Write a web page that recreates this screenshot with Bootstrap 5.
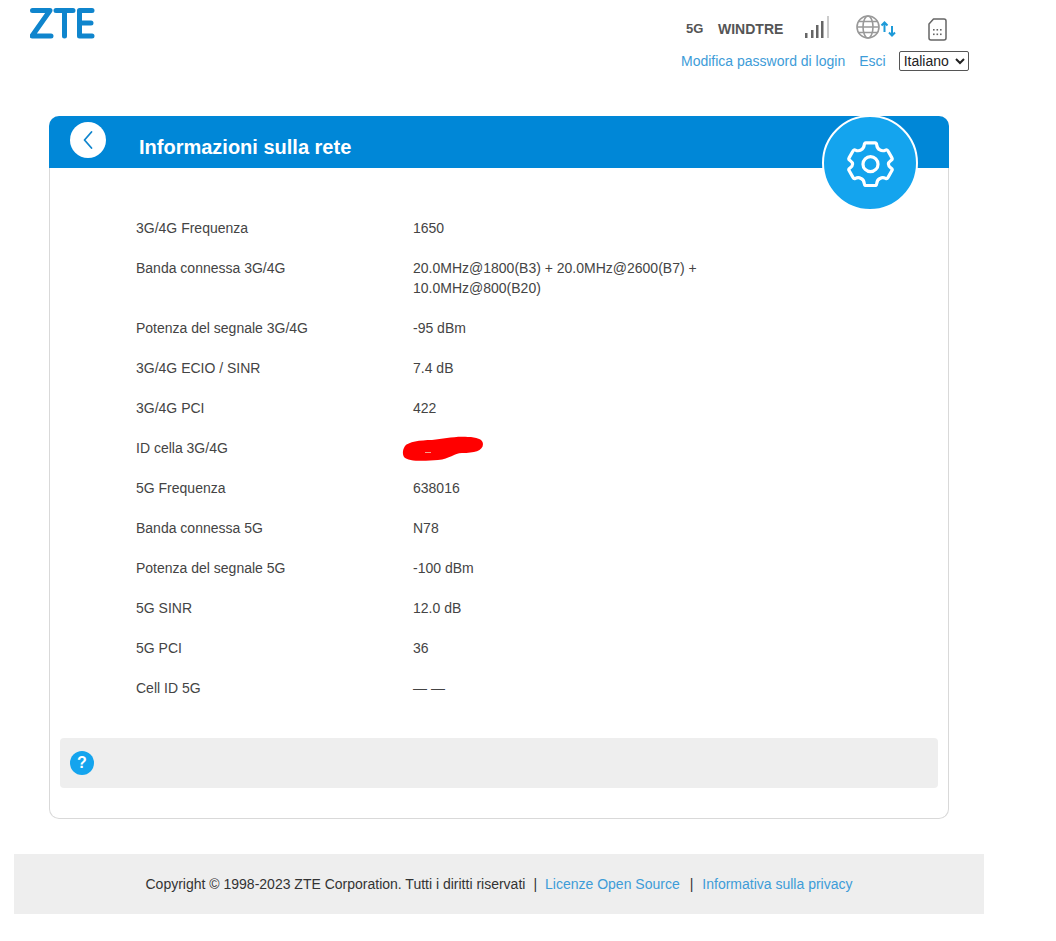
<!DOCTYPE html>
<html lang="it">
<head>
<meta charset="utf-8">
<title>Informazioni sulla rete</title>
<link href="https://cdn.jsdelivr.net/npm/bootstrap@5.3.0/dist/css/bootstrap.min.css" rel="stylesheet">
<style>
body{font-family:"Liberation Sans",Arial,sans-serif;font-size:14px;color:#444;background:#fff;height:941px;overflow:hidden}
a{color:#3d9cd8;text-decoration:none}
.shell{width:970px;margin-left:14px}
.top-bar{height:116px;padding:8px 15px 0 16px}
.logo-svg{display:block;width:66px;height:31px}
.status-col{width:288px}
.status-row{height:41px;padding:7px 0 0 5px}
.net-tag{font-weight:700;color:#555;font-size:14px}
.tag-5g{font-size:13px;width:32px}
.tag-op{width:87px}
.sig-svg{width:25px;height:25px;margin-right:26px}
.globe-svg{width:41px;height:25px;margin-right:31px}
.sim-svg{width:19px;height:23px;margin-top:3px}
.link-row{font-size:14px;line-height:20px;height:20px;margin-top:2px}
.link-row a{margin-right:14px}
.link-row a + a{margin-right:13px}
.lang-select{font-family:"Liberation Sans",Arial,sans-serif;font-size:14px;width:70px;height:20px;color:#222;background:#fff;border:1px solid #555;border-radius:2px;padding:0}
.panel{width:900px;margin-left:35px;height:703px;border:1px solid #d9d9d9;border-top:0;border-radius:10px;position:relative}
.panel-head{height:52px;background:#0087d7;border-radius:10px 10px 0 0;margin:0 -1px;padding:0 0 0 21px}
.back-dot{width:36px;height:36px;border-radius:50%;background:#fff;margin-top:6px}
.back-dot svg{width:12px;height:20px}
.panel-title{color:#fff;font-size:20px;font-weight:700;margin:0 0 0 33px;line-height:62px}
.gear-badge{position:absolute;left:772px;top:-1px;width:96px;height:96px;border-radius:50%;background:#14a4ee;border:2px solid #fff}
.gear-badge svg{width:47px;height:47px}
.info-list{padding:40px 0 0 86px;height:570px;margin:0}
.info-row{min-height:40px;line-height:20px;padding:10px 0}
.info-key{width:277px;flex:none}
.info-val{width:300px}
.mask-svg{display:block;width:82px;height:28px;margin:-3px 0 -5px -11px}
.help-bar{height:50px;margin:0 10px;background:#eee;border-radius:4px;padding-left:10px}
.help-dot{width:24px;height:24px;border-radius:50%;background:#14a4ee;color:#fff;font-weight:700;font-size:16px;line-height:24px;text-align:center}
.foot-bar{height:60px;margin-top:35px;background:#eee;line-height:60px;color:#333;text-align:center}
.foot-sep{margin:0 8px}
.foot-sep-b{margin:0 9px 0 10px}
</style>
</head>
<body>
<div class="shell">
  <header class="top-bar d-flex justify-content-between">
    <svg class="logo-svg" viewBox="0 0 66 31" role="img" aria-label="ZTE">
      <g fill="none" stroke="#0f85cd" stroke-width="5" stroke-linecap="round" stroke-linejoin="round">
        <path d="M2.500 2.500H20L2 28H21"/>
        <path d="M26 2.500H43M34.500 2.500V28"/>
        <path d="M62 2.500H49.500V28H62M49.500 15H61"/>
      </g>
    </svg>
    <div class="status-col">
      <div class="status-row d-flex align-items-start">
        <span class="net-tag tag-5g mt-1">5G</span>
        <span class="net-tag tag-op mt-1">WINDTRE</span>
        <svg class="sig-svg" viewBox="0 0 25 25">
          <g fill="#666"><rect x="0" y="18" width="2.500" height="5"/><rect x="6" y="15" width="2.500" height="8"/><rect x="11" y="10" width="2.500" height="13"/><rect x="16" y="6" width="2.500" height="17"/></g>
          <rect x="22" y="1" width="2" height="22" fill="#ccc"/>
        </svg>
        <svg class="globe-svg" viewBox="0 0 41 25">
          <g fill="none" stroke="#999" stroke-width="1.600"><circle cx="12" cy="12" r="11"/><ellipse cx="12" cy="12" rx="5" ry="11"/><path d="M1 12H23M2.500 6.500H21.500M2.500 17.500H21.500"/></g>
          <g fill="none" stroke="#1d9ad8" stroke-width="2"><path d="M28.500 7.500V17M25.500 10.500L28.500 7.500L31.500 10.500"/><path d="M36 11V20.500M33 17.500L36 20.500L39 17.500"/></g>
        </svg>
        <svg class="sim-svg" viewBox="0 0 19 23">
          <path d="M5.500 1H16a2 2 0 0 1 2 2V20a2 2 0 0 1-2 2H3a2 2 0 0 1-2-2V6Z" fill="none" stroke="#666" stroke-width="1.500" stroke-linejoin="round"/>
          <g fill="#666"><rect x="5" y="11" width="1.600" height="1.600"/><rect x="8.500" y="11" width="1.600" height="1.600"/><rect x="12" y="11" width="1.600" height="1.600"/><rect x="5" y="15.500" width="1.600" height="1.600"/><rect x="8.500" y="15.500" width="1.600" height="1.600"/><rect x="12" y="15.500" width="1.600" height="1.600"/></g>
        </svg>
      </div>
      <div class="link-row d-flex align-items-center">
        <a href="#">Modifica password di login</a>
        <a href="#">Esci</a>
        <select class="lang-select" aria-label="Lingua"><option>Italiano</option></select>
      </div>
    </div>
  </header>

  <section class="panel">
    <div class="panel-head d-flex align-items-start">
      <div class="back-dot d-flex align-items-center justify-content-center">
        <svg viewBox="0 0 12 20"><path d="M9.500 2L2.500 10L9.500 18" fill="none" stroke="#0f85cd" stroke-width="1.800" stroke-linecap="round" stroke-linejoin="round"/></svg>
      </div>
      <h1 class="panel-title">Informazioni sulla rete</h1>
    </div>
    <div class="gear-badge d-flex align-items-center justify-content-center">
      <svg viewBox="0 0 50 50"><g fill="none" stroke="#fff" stroke-width="3.400" stroke-linejoin="round"><path d="M20 3H30C31 3 31.500 4 31.700 5.500C32 8 33 9.500 35 10.500C37 11.700 39 11.700 41 10.700C42 10.200 43 10.500 43.500 11.500L47.800 19C48.300 20 48 21 47 21.500C45 23 44 24 44 25.500C44 27 45 28.500 47 30C48 30.500 48.300 31.500 47.800 32.500L43.500 40C43 41 42 41.300 41 40.800C39 39.800 37 39.800 35 41C33 42 32 43.500 31.700 46C31.500 47.500 31 48.500 30 48.500H20C19 48.500 18.500 47.500 18.300 46C18 43.500 17 42 15 41C13 39.800 11 39.800 9 40.800C8 41.300 7 41 6.500 40L2.200 32.500C1.700 31.500 2 30.500 3 30C5 28.500 6 27 6 25.500C6 24 5 23 3 21.500C2 21 1.700 20 2.200 19L6.500 11.500C7 10.500 8 10.200 9 10.700C11 11.700 13 11.700 15 10.500C17 9.500 18 8 18.300 5.500C18.500 4 19 3 20 3Z"/><circle cx="25" cy="25.700" r="8"/></g></svg>
    </div>
    <div class="info-list">
      <div class="info-row d-flex"><div class="info-key">3G/4G Frequenza</div><div class="info-val">1650</div></div>
      <div class="info-row d-flex"><div class="info-key">Banda connessa 3G/4G</div><div class="info-val">20.0MHz@1800(B3) + 20.0MHz@2600(B7) + 10.0MHz@800(B20)</div></div>
      <div class="info-row d-flex"><div class="info-key">Potenza del segnale 3G/4G</div><div class="info-val">-95 dBm</div></div>
      <div class="info-row d-flex"><div class="info-key">3G/4G ECIO / SINR</div><div class="info-val">7.4 dB</div></div>
      <div class="info-row d-flex"><div class="info-key">3G/4G PCI</div><div class="info-val">422</div></div>
      <div class="info-row d-flex"><div class="info-key">ID cella 3G/4G</div><div class="info-val"><svg class="mask-svg" viewBox="0 0 82 28"><path d="M3 11C6 7 18 5 30 5C42 4 52 1 66 2C74 2 81 4 81 9C81 16 72 18 60 18C52 18 48 24 36 25C24 26 6 27 2 22C0 18 1 14 3 11Z" fill="#f00"/><path d="M23 17.500H29" stroke="#f4a08c" stroke-width="1" fill="none"/></svg></div></div>
      <div class="info-row d-flex"><div class="info-key">5G Frequenza</div><div class="info-val">638016</div></div>
      <div class="info-row d-flex"><div class="info-key">Banda connessa 5G</div><div class="info-val">N78</div></div>
      <div class="info-row d-flex"><div class="info-key">Potenza del segnale 5G</div><div class="info-val">-100 dBm</div></div>
      <div class="info-row d-flex"><div class="info-key">5G SINR</div><div class="info-val">12.0 dB</div></div>
      <div class="info-row d-flex"><div class="info-key">5G PCI</div><div class="info-val">36</div></div>
      <div class="info-row d-flex"><div class="info-key">Cell ID 5G</div><div class="info-val">— —</div></div>
    </div>
    <div class="help-bar d-flex align-items-center">
      <div class="help-dot">?</div>
    </div>
  </section>

  <footer class="foot-bar">Copyright © 1998-2023 ZTE Corporation. Tutti i diritti riservati<span class="foot-sep">|</span><a href="#">Licenze Open Source</a><span class="foot-sep-b">|</span><a href="#">Informativa sulla privacy</a></footer>
</div>
<script src="https://cdn.jsdelivr.net/npm/bootstrap@5.3.0/dist/js/bootstrap.bundle.min.js"></script>
</body>
</html>
